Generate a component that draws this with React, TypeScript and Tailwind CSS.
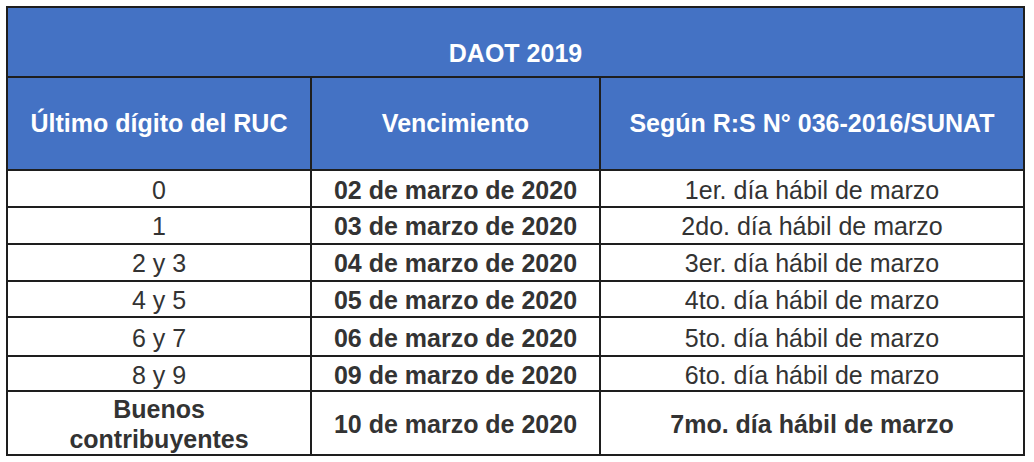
import React from "react";

const rows: { a: string; b: string; c: string; h: string; bold?: boolean }[] = [
  { a: "0", b: "02 de marzo de 2020", c: "1er. día hábil de marzo", h: "h-[37px]" },
  { a: "1", b: "03 de marzo de 2020", c: "2do. día hábil de marzo", h: "h-[37px]" },
  { a: "2 y 3", b: "04 de marzo de 2020", c: "3er. día hábil de marzo", h: "h-[37px]" },
  { a: "4 y 5", b: "05 de marzo de 2020", c: "4to. día hábil de marzo", h: "h-[37px]" },
  { a: "6 y 7", b: "06 de marzo de 2020", c: "5to. día hábil de marzo", h: "h-[39px]" },
  { a: "8 y 9", b: "09 de marzo de 2020", c: "6to. día hábil de marzo", h: "h-[35px]" },
];

export default function App() {
  return (
    <div
      className="bg-white w-[1034px] h-[462px] pt-[6px] pl-[6px]"
      style={{ fontFamily: '"Liberation Sans", Arial, Helvetica, sans-serif' }}
    >
      <div className="w-[1019px] h-[450px] border-2 border-[#1e1e1e] flex flex-col text-[25px] leading-[29px] text-[#333333]">
        <div className="h-[68px] bg-[#4472c4] text-white font-bold flex items-end justify-center pb-[8px]">
          DAOT 2019
        </div>
        <div className="h-[94px] border-t-2 border-[#1e1e1e] bg-[#4472c4] text-white font-bold flex">
          <div className="w-[302px] flex items-center justify-center">Último dígito del RUC</div>
          <div className="w-[289px] border-l-2 border-[#1e1e1e] flex items-center justify-center">
            Vencimiento
          </div>
          <div className="flex-1 border-l-2 border-[#1e1e1e] flex items-center justify-center">
            Según R:S N° 036-2016/SUNAT
          </div>
        </div>
        {rows.map((r) => (
          <div key={r.a} className={`${r.h} border-t-2 border-[#1e1e1e] flex`}>
            <div className="w-[302px] flex items-center justify-center pt-[3px]">{r.a}</div>
            <div className="w-[289px] border-l-2 border-[#1e1e1e] flex items-center justify-center font-bold pt-[3px]">
              {r.b}
            </div>
            <div className="flex-1 border-l-2 border-[#1e1e1e] flex items-center justify-center pt-[3px]">{r.c}</div>
          </div>
        ))}
        <div className="flex-1 border-t-2 border-[#1e1e1e] flex font-bold">
          <div className="w-[302px] flex flex-col items-center justify-center leading-[30px] pt-[2px]">
            <span>Buenos</span>
            <span>contribuyentes</span>
          </div>
          <div className="w-[289px] border-l-2 border-[#1e1e1e] flex items-center justify-center pt-[2px]">
            10 de marzo de 2020
          </div>
          <div className="flex-1 border-l-2 border-[#1e1e1e] flex items-center justify-center pt-[2px]">
            7mo. día hábil de marzo
          </div>
        </div>
      </div>
    </div>
  );
}
